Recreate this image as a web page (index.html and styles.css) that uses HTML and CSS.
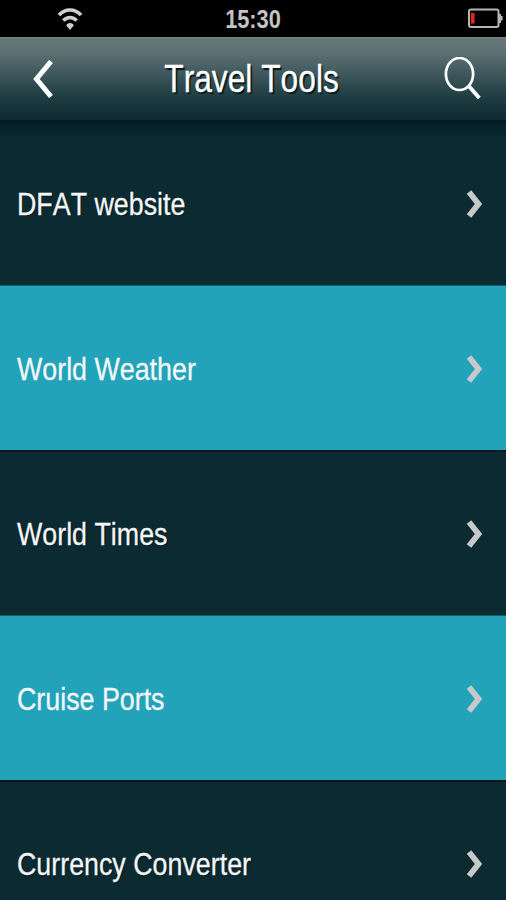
FILE: index.html
```html
<!DOCTYPE html>
<html lang="en">
<head>
  <meta charset="UTF-8" />
  <meta name="viewport" content="width=device-width, initial-scale=1.0" />
  <title>Travel Tools</title>
  <link rel="stylesheet" href="styles.css">
</head>
<body>
  <div class="status-bar">
    <svg class="wifi" width="26" height="23" viewBox="0 0 26 23" fill="none" stroke="#cfcfcf" stroke-width="3.6">
      <path d="M2 7.2C8 .2 18 .2 24 7.2" />
      <path d="M6.4 12.6C10.2 8.4 15.8 8.4 19.6 12.6" />
      <path d="M13 22L9.4 17.8C9.4 14.2 16.6 14.2 16.6 17.8Z" fill="#cfcfcf" stroke="none" />
    </svg>
    <span class="time">15:30</span>
    <svg class="battery" width="35" height="20" viewBox="0 0 35 20">
      <rect x="1" y="1.5" width="29.5" height="17.5" rx="2" fill="none" stroke="#b5b5b5" stroke-width="2" />
      <path d="M31 6H33V8H34.6V12.5H33V15H31Z" fill="#b5b5b5" />
      <rect x="3" y="5" width="3.6" height="10.5" fill="#e0291c" />
    </svg>
  </div>
  <header>
    <svg class="back" width="22" height="38" viewBox="0 0 22 38">
      <path d="M19 1.5L4.5 19L19 36.5" fill="none" stroke="#fff" stroke-width="5" />
    </svg>
    <h1>Travel Tools</h1>
    <svg class="search" width="38" height="44" viewBox="0 0 38 44" fill="none" stroke="#fff">
      <ellipse cx="15.5" cy="17" rx="13.6" ry="16" stroke-width="2.7" />
      <path d="M24.8 29L35.3 41" stroke-width="3.8" />
    </svg>
  </header>
  <main>
    <a class="row">
      <span>DFAT website</span>
      <svg class="chevron" viewBox="0 0 18 30"><path d="M4 3L13.5 15L4 27" /></svg>
    </a>
    <a class="row light">
      <span>World Weather</span>
      <svg class="chevron" viewBox="0 0 18 30"><path d="M4 3L13.5 15L4 27" /></svg>
    </a>
    <a class="row">
      <span>World Times</span>
      <svg class="chevron" viewBox="0 0 18 30"><path d="M4 3L13.5 15L4 27" /></svg>
    </a>
    <a class="row light">
      <span>Cruise Ports</span>
      <svg class="chevron" viewBox="0 0 18 30"><path d="M4 3L13.5 15L4 27" /></svg>
    </a>
    <a class="row">
      <span>Currency Converter</span>
      <svg class="chevron" viewBox="0 0 18 30"><path d="M4 3L13.5 15L4 27" /></svg>
    </a>
  </main>
</body>
</html>
```
FILE: styles.css
```css
:root {
  --dark: #0b2a31;
  --teal: #22a3ba;
}
* { box-sizing: border-box; margin: 0; padding: 0; }
body {
  height: 900px;
  overflow: hidden;
  background: var(--dark);
  color: #f4f6f7;
  font-family: "Liberation Sans", Arial, sans-serif;
  font-kerning: none;
}
svg { display: block; }
.status-bar {
  display: flex;
  justify-content: space-between;
  height: 37px;
  padding: 8px 3px 0 57px;
  background: #000;
}
.time {
  width: 70px;
  margin-left: 81px;
  margin-right: 127px;
  text-align: center;
  font-size: 25px;
  line-height: 22px;
  font-weight: bold;
  color: #c4c4c4;
  transform: scaleX(0.87);
}
header {
  display: flex;
  justify-content: space-between;
  align-items: center;
  height: 83px;
  padding: 0 24px 0 32px;
  border-top: 1px solid #76827f;
  background: linear-gradient(#687b7a 0%, #5c7073 18%, #3d565b 45%, #1d3b40 74%, #0b292e 100%);
}
header h1 {
  margin-left: 6px;
  font-size: 38px;
  font-weight: normal;
  line-height: 44px;
  color: #fff;
  text-shadow: 2px 2px 1px #041a1e;
  -webkit-text-stroke: 0.3px #fff;
  transform: scaleX(0.835);
}
.row {
  display: flex;
  justify-content: space-between;
  align-items: center;
  height: 165px;
  padding: 1px 23px 0 16.5px;
  border-top: 2px solid #04171b;
  background: var(--dark);
}
.row:first-child {
  border-top: none;
  padding-top: 3px;
  background: linear-gradient(#041a1e, #06222a 6px, var(--dark) 22px);
}
.row.light {
  padding-top: 2px;
  border-top: 1px solid #0f5e6c;
  background: var(--teal);
}
.row span {
  font-size: 32px;
  line-height: 40px;
  white-space: nowrap;
  text-shadow: 1px 1px 1px #04171b;
  -webkit-text-stroke: 0.3px #f4f6f7;
  transform: scaleX(0.838);
  transform-origin: left;
}
.row.light span { text-shadow: none; }
.chevron {
  width: 18px;
  height: 30px;
  fill: none;
  stroke: #c6c8ca;
  stroke-width: 5.8;
}
```
